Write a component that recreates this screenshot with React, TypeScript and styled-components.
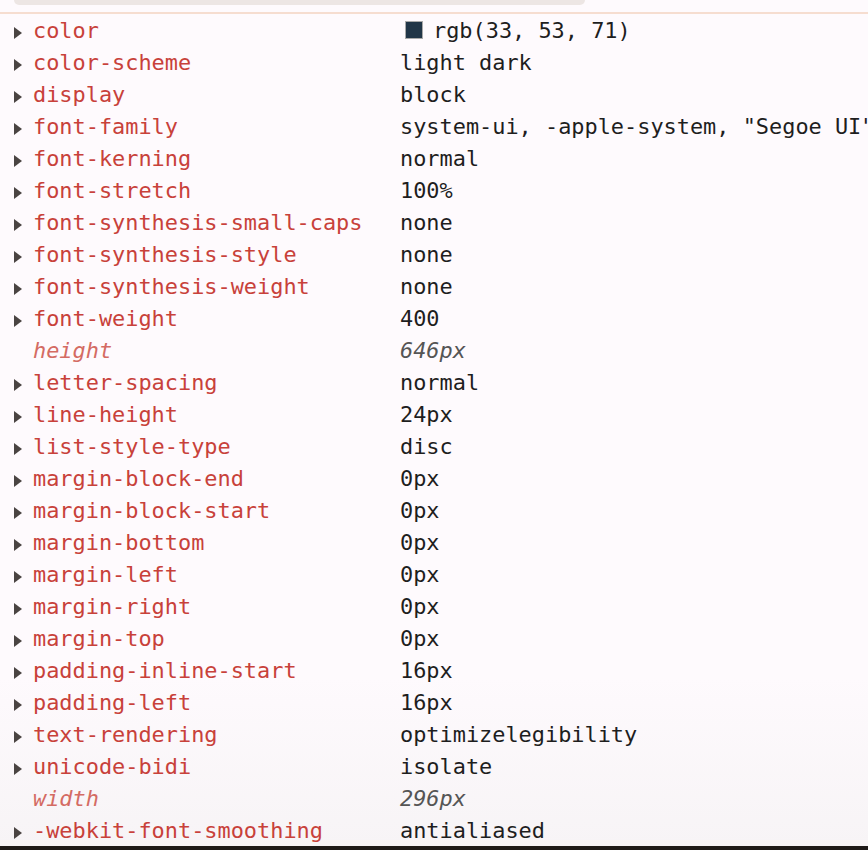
import React from "react";
import styled, { createGlobalStyle } from "styled-components";

const GlobalStyle = createGlobalStyle`
  html, body {
    margin: 0;
    padding: 0;
    background: #1e1a18;
  }
  body {
    font-family: "DejaVu Sans Mono", monospace;
  }
`;

const Panel = styled.div`
  width: 868px;
  height: 846px;
  overflow: hidden;
  background: linear-gradient(180deg, #fefafd 0%, #fefafd 80%, #f7f4f6 100%);
  display: flex;
  flex-direction: column;
`;

const Header = styled.div`
  height: 12px;
  padding: 0 283px 0 14px;
  flex-shrink: 0;
  border-bottom: 2px solid #f6ddd0;
  box-sizing: content-box;
`;

const FilterBox = styled.div`
  height: 5px;
  background: #ede6e4;
  border-radius: 0 0 14px 14px;
`;

const List = styled.div`
  display: flex;
  flex-direction: column;
`;

const Row = styled.div`
  height: 32px;
  display: flex;
  align-items: center;
  font-size: 21.9px;
  white-space: nowrap;
`;

const Toggle = styled.div<{ $visible: boolean }>`
  width: 33px;
  flex-shrink: 0;
  display: flex;
  align-items: center;
  padding-left: 14px;
  box-sizing: border-box;
  visibility: ${(p) => (p.$visible ? "visible" : "hidden")};
`;

const Arrow = styled.span`
  width: 0;
  height: 0;
  border-top: 6px solid transparent;
  border-bottom: 6px solid transparent;
  border-left: 8px solid #4a4442;
  margin-top: 5px;
`;

const Name = styled.span<{ $inherited: boolean }>`
  width: 367px;
  flex-shrink: 0;
  color: ${(p) => (p.$inherited ? "#d46b63" : "#c8413a")};
  font-style: ${(p) => (p.$inherited ? "italic" : "normal")};
`;

const Value = styled.span<{ $inherited: boolean }>`
  color: ${(p) => (p.$inherited ? "#555" : "#1e1e1e")};
  font-style: ${(p) => (p.$inherited ? "italic" : "normal")};
  display: flex;
  align-items: center;
`;

const Swatch = styled.span<{ $color: string }>`
  width: 16px;
  height: 16px;
  background: ${(p) => p.$color};
  border: 1px solid #a9a9a9;
  margin: 0 10px 0 5px;
`;

type Prop = { name: string; value: string; computed?: boolean; swatch?: string };

const props: Prop[] = [
  { name: "color", value: "rgb(33, 53, 71)", swatch: "#213547" },
  { name: "color-scheme", value: "light dark" },
  { name: "display", value: "block" },
  { name: "font-family", value: 'system-ui, -apple-system, "Segoe UI", Roboto' },
  { name: "font-kerning", value: "normal" },
  { name: "font-stretch", value: "100%" },
  { name: "font-synthesis-small-caps", value: "none" },
  { name: "font-synthesis-style", value: "none" },
  { name: "font-synthesis-weight", value: "none" },
  { name: "font-weight", value: "400" },
  { name: "height", value: "646px", computed: true },
  { name: "letter-spacing", value: "normal" },
  { name: "line-height", value: "24px" },
  { name: "list-style-type", value: "disc" },
  { name: "margin-block-end", value: "0px" },
  { name: "margin-block-start", value: "0px" },
  { name: "margin-bottom", value: "0px" },
  { name: "margin-left", value: "0px" },
  { name: "margin-right", value: "0px" },
  { name: "margin-top", value: "0px" },
  { name: "padding-inline-start", value: "16px" },
  { name: "padding-left", value: "16px" },
  { name: "text-rendering", value: "optimizelegibility" },
  { name: "unicode-bidi", value: "isolate" },
  { name: "width", value: "296px", computed: true },
  { name: "-webkit-font-smoothing", value: "antialiased" },
];

const App = () => (
  <>
    <GlobalStyle />
    <Panel>
      <Header>
        <FilterBox />
      </Header>
      <List>
        {props.map((p) => (
          <Row key={p.name}>
            <Toggle $visible={!p.computed}>
              <Arrow />
            </Toggle>
            <Name $inherited={!!p.computed}>{p.name}</Name>
            <Value $inherited={!!p.computed}>
              {p.swatch && <Swatch $color={p.swatch} />}
              {p.value}
            </Value>
          </Row>
        ))}
      </List>
    </Panel>
  </>
);

export default App;
